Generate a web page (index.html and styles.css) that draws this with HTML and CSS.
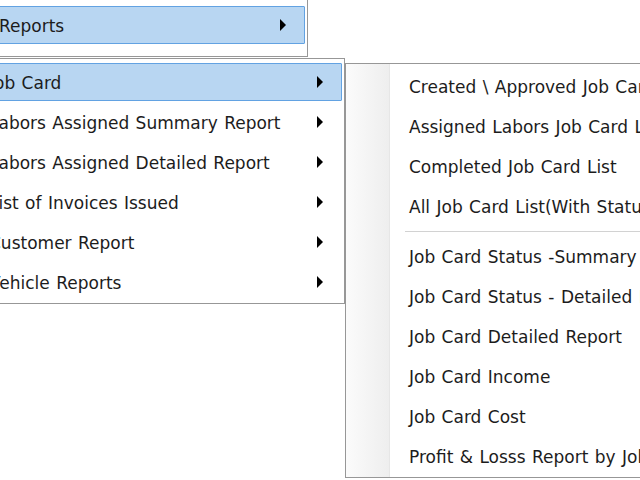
FILE: index.html
```html
<!DOCTYPE html>
<html>
    <head>
        <title>Reports Menu</title>
        <link rel="stylesheet" href="styles.css">
    </head>
    <body>
        <div class="menu menu-main">
            <div class="item active sub">Reports</div>
        </div>

        <div class="menu menu-reports">
            <div class="item active sub">Job Card</div>
            <div class="item sub">Labors Assigned Summary Report</div>
            <div class="item sub">Labors Assigned Detailed Report</div>
            <div class="item sub">List of Invoices Issued</div>
            <div class="item sub">Customer Report</div>
            <div class="item sub">Vehicle Reports</div>
        </div>

        <div class="menu menu-jobcard">
            <div class="item">Created \ Approved Job Card List</div>
            <div class="item">Assigned Labors Job Card List</div>
            <div class="item">Completed Job Card List</div>
            <div class="item">All Job Card List(With Status)</div>
            <div class="separator"></div>
            <div class="item">Job Card Status -Summary Report</div>
            <div class="item">Job Card Status - Detailed Report</div>
            <div class="item">Job Card Detailed Report</div>
            <div class="item">Job Card Income</div>
            <div class="item">Job Card Cost</div>
            <div class="item">Profit &amp; Losss Report by Job Card</div>
        </div>
    </body>
</html>
```

FILE: styles.css
```css
html, body {
    margin: 0;
    width: 640px;
    height: 480px;
    overflow: hidden;
    background: #fff;
}
body {
    position: relative;
    font-family: "DejaVu Sans", sans-serif;
    font-size: 17px;
    word-spacing: 1px;
    color: #1c1c1c;
}

/* popup menus cascade over each other */
.menu {
    position: absolute;
    box-sizing: border-box;
    border: 1px solid #979797;
    padding: 3px 2px 0;
    background: linear-gradient(to right, #fbfbfb 0, #eeeeee 43px, #e6e6e6 43px, #e6e6e6 44px, #fff 44px) no-repeat;
    background-color: #fff;
}
.menu-main {
    left: -65px;
    top: -20px;
    width: 373px;
    padding-top: 25px;
    padding-bottom: 10px;
}
.menu-reports {
    left: -75px;
    top: 58px;
    width: 420px;
    padding-top: 4px;
}
.menu-jobcard {
    left: 345px;
    top: 63px;
    width: 420px;
}

.item {
    display: flex;
    align-items: center;
    box-sizing: border-box;
    height: 38px;
    margin: 0 0 2px;
    padding: 2px 18px 0 60px;
    border: 1px solid transparent;
    border-radius: 1px;
    white-space: nowrap;
}
.item.active {
    background: #b8d6f2;
    border-color: #62a2e2;
}
.item.sub::after {
    content: "";
    margin: -2px 0 0 auto;
    border-left: 6px solid #000;
    border-top: 6px solid transparent;
    border-bottom: 6px solid transparent;
}

.separator {
    height: 1px;
    margin: 6px 0 4px 57px;
    background: #d2d2d2;
    border-bottom: 1px solid #fff;
}
```
